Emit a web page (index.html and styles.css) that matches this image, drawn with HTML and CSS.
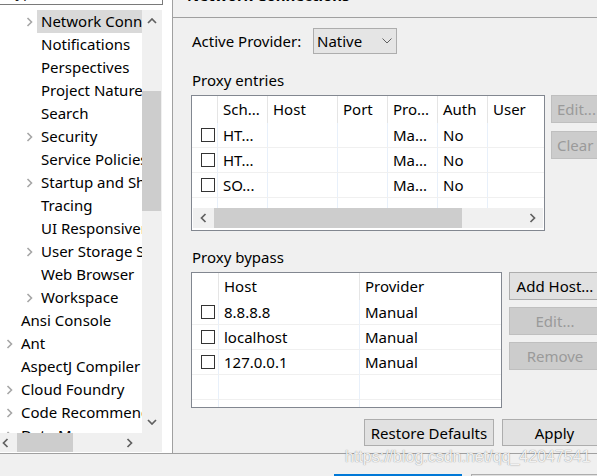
FILE: index.html
```html
<!DOCTYPE html>
<html>
<head>
<meta charset="utf-8">
<title>Preferences - Network Connections</title>
<link rel="stylesheet" href="styles.css">
</head>
<body>
<div class="main">
  <aside class="nav">
    <div class="filter">type filter text</div>
    <div class="tree-frame">
      <div class="tree-top">
        <ul class="tree">
          <li class="node l1"><span class="tw"><svg width="7" height="10" viewBox="0 0 7 10"><path d="M1.5 1 L5.5 5 L1.5 9" fill="none" stroke="#a6a6a6" stroke-width="1.6"/></svg></span><span class="lbl sel">Network Connections</span></li>
          <li class="node l1"><span class="tw"></span><span class="lbl">Notifications</span></li>
          <li class="node l1"><span class="tw"></span><span class="lbl">Perspectives</span></li>
          <li class="node l1"><span class="tw"></span><span class="lbl">Project Natures</span></li>
          <li class="node l1"><span class="tw"></span><span class="lbl">Search</span></li>
          <li class="node l1"><span class="tw"><svg width="7" height="10" viewBox="0 0 7 10"><path d="M1.5 1 L5.5 5 L1.5 9" fill="none" stroke="#a6a6a6" stroke-width="1.6"/></svg></span><span class="lbl">Security</span></li>
          <li class="node l1"><span class="tw"></span><span class="lbl">Service Policies</span></li>
          <li class="node l1"><span class="tw"><svg width="7" height="10" viewBox="0 0 7 10"><path d="M1.5 1 L5.5 5 L1.5 9" fill="none" stroke="#a6a6a6" stroke-width="1.6"/></svg></span><span class="lbl">Startup and Shutdown</span></li>
          <li class="node l1"><span class="tw"></span><span class="lbl">Tracing</span></li>
          <li class="node l1"><span class="tw"></span><span class="lbl">UI Responsiveness</span></li>
          <li class="node l1"><span class="tw"><svg width="7" height="10" viewBox="0 0 7 10"><path d="M1.5 1 L5.5 5 L1.5 9" fill="none" stroke="#a6a6a6" stroke-width="1.6"/></svg></span><span class="lbl">User Storage Service</span></li>
          <li class="node l1"><span class="tw"></span><span class="lbl">Web Browser</span></li>
          <li class="node l1"><span class="tw"><svg width="7" height="10" viewBox="0 0 7 10"><path d="M1.5 1 L5.5 5 L1.5 9" fill="none" stroke="#a6a6a6" stroke-width="1.6"/></svg></span><span class="lbl">Workspace</span></li>
          <li class="node l0"><span class="tw"></span><span class="lbl">Ansi Console</span></li>
          <li class="node l0"><span class="tw"><svg width="7" height="10" viewBox="0 0 7 10"><path d="M1.5 1 L5.5 5 L1.5 9" fill="none" stroke="#a6a6a6" stroke-width="1.6"/></svg></span><span class="lbl">Ant</span></li>
          <li class="node l0"><span class="tw"></span><span class="lbl">AspectJ Compiler</span></li>
          <li class="node l0"><span class="tw"><svg width="7" height="10" viewBox="0 0 7 10"><path d="M1.5 1 L5.5 5 L1.5 9" fill="none" stroke="#a6a6a6" stroke-width="1.6"/></svg></span><span class="lbl">Cloud Foundry</span></li>
          <li class="node l0"><span class="tw"><svg width="7" height="10" viewBox="0 0 7 10"><path d="M1.5 1 L5.5 5 L1.5 9" fill="none" stroke="#a6a6a6" stroke-width="1.6"/></svg></span><span class="lbl">Code Recommenders</span></li>
          <li class="node l0"><span class="tw"><svg width="7" height="10" viewBox="0 0 7 10"><path d="M1.5 1 L5.5 5 L1.5 9" fill="none" stroke="#a6a6a6" stroke-width="1.6"/></svg></span><span class="lbl">Data Management</span></li>
        </ul>
        <div class="vscroll">
          <span class="vbtn"><svg width="10" height="6" viewBox="0 0 10 6"><path d="M1 5 L5 1 L9 5" fill="none" stroke="#606060" stroke-width="1.7"/></svg></span>
          <span class="vthumb"></span>
          <span class="vbtn down"><svg width="10" height="6" viewBox="0 0 10 6"><path d="M1 1 L5 5 L9 1" fill="none" stroke="#606060" stroke-width="1.7"/></svg></span>
        </div>
      </div>
      <div class="tree-bottom">
        <div class="hscroll tree-h">
          <span class="hbtn first"><svg width="7" height="10" viewBox="0 0 7 10"><path d="M5.5 1 L1.5 5 L5.5 9" fill="none" stroke="#606060" stroke-width="1.7"/></svg></span>
          <span class="hthumb tree-thumb"></span>
          <span class="hbtn last"><svg width="7" height="10" viewBox="0 0 7 10"><path d="M1.5 1 L5.5 5 L1.5 9" fill="none" stroke="#606060" stroke-width="1.7"/></svg></span>
        </div>
        <div class="corner"></div>
      </div>
    </div>
  </aside>

  <section class="page">
    <div class="title-bar"><h1 class="title">Network Connections</h1></div>
    <div class="page-body">
      <div class="provider-row">
        <span class="text-label">Active Provider:</span>
        <div class="combo"><span>Native</span><svg width="10" height="6" viewBox="0 0 10 6"><path d="M0.5 0.5 L5 5 L9.5 0.5" fill="none" stroke="#606060" stroke-width="1"/></svg></div>
      </div>

      <div class="section-label">Proxy entries</div>
      <div class="group">
        <div class="grid entries">
          <div class="row head">
            <span class="hc"></span><span class="hc">Sch...</span><span class="hc">Host</span><span class="hc">Port</span><span class="hc">Pro...</span><span class="hc">Auth</span><span class="hc">User</span>
          </div>
          <div class="row">
            <span class="c"><span class="cb"></span></span><span class="c">HT...</span><span class="c"></span><span class="c"></span><span class="c">Ma...</span><span class="c">No</span><span class="c"></span>
          </div>
          <div class="row">
            <span class="c"><span class="cb"></span></span><span class="c">HT...</span><span class="c"></span><span class="c"></span><span class="c">Ma...</span><span class="c">No</span><span class="c"></span>
          </div>
          <div class="row">
            <span class="c"><span class="cb"></span></span><span class="c">SO...</span><span class="c"></span><span class="c"></span><span class="c">Ma...</span><span class="c">No</span><span class="c"></span>
          </div>
          <div class="row filler">
            <span class="c"></span><span class="c"></span><span class="c"></span><span class="c"></span><span class="c"></span><span class="c"></span><span class="c"></span>
          </div>
          <div class="hscroll table-h">
            <span class="hbtn"><svg width="7" height="10" viewBox="0 0 7 10"><path d="M5.5 1 L1.5 5 L5.5 9" fill="none" stroke="#606060" stroke-width="1.7"/></svg></span>
            <span class="hthumb table-thumb"></span>
            <span class="hbtn last"><svg width="7" height="10" viewBox="0 0 7 10"><path d="M1.5 1 L5.5 5 L1.5 9" fill="none" stroke="#606060" stroke-width="1.7"/></svg></span>
          </div>
        </div>
        <div class="side-buttons narrow">
          <button class="btn disabled">Edit...</button>
          <button class="btn disabled">Clear</button>
        </div>
      </div>

      <div class="section-label gap-top">Proxy bypass</div>
      <div class="group">
        <div class="grid bypass">
          <div class="row head">
            <span class="hc"></span><span class="hc">Host</span><span class="hc">Provider</span>
          </div>
          <div class="row"><span class="c"><span class="cb"></span></span><span class="c">8.8.8.8</span><span class="c">Manual</span></div>
          <div class="row"><span class="c"><span class="cb"></span></span><span class="c">localhost</span><span class="c">Manual</span></div>
          <div class="row"><span class="c"><span class="cb"></span></span><span class="c">127.0.0.1</span><span class="c">Manual</span></div>
          <div class="row"><span class="c"></span><span class="c"></span><span class="c"></span></div>
          <div class="row"><span class="c"></span><span class="c"></span><span class="c"></span></div>
        </div>
        <div class="side-buttons wide">
          <button class="btn">Add Host...</button>
          <button class="btn disabled">Edit...</button>
          <button class="btn disabled">Remove</button>
        </div>
      </div>

      <div class="page-buttons">
        <button class="btn restore">Restore Defaults</button>
        <button class="btn apply">Apply</button>
      </div>
    </div>
  </section>
</div>
<footer class="footer">
  <button class="fbtn primary">Apply and Close</button>
  <button class="fbtn">Cancel</button>
</footer>
<div class="watermark">https://blog.csdn.net/qq_42047541</div>
</body>
</html>
```

FILE: styles.css
```css
* { box-sizing: border-box; }

html, body {
  margin: 0;
  padding: 0;
}

body {
  width: 597px;
  height: 476px;
  overflow: hidden;
  position: relative;
  background: #f0f0f0;
  color: #000;
  font-family: "Noto Sans", "Open Sans", sans-serif;
  font-size: 15px;
}

button {
  font-family: inherit;
  font-size: 15px;
  color: #000;
  padding: 0;
  margin: 0;
}

.main {
  display: flex;
  height: 454px;
  border-bottom: 1px solid #a0a0a0;
}

/* ---------- left navigation ---------- */
.nav {
  flex: none;
  width: 173px;
  background: #fff;
  border-right: 1px solid #a0a0a0;
  display: flex;
  flex-direction: column;
}

.filter {
  width: 163px;
  height: 22px;
  margin-top: -17px;
  border: 1px solid #7a7a7a;
  border-top: none;
  border-left: none;
  padding-left: 10px;
  line-height: 16px;
  color: #202020;
  white-space: nowrap;
  overflow: hidden;
}

.tree-frame {
  width: 162px;
  margin-top: 5px;
  height: 442px;
  display: flex;
  flex-direction: column;
}

.tree-top {
  display: flex;
  height: 423px;
}

.tree {
  list-style: none;
  margin: 0;
  padding: 0;
  width: 142px;
  flex: none;
  overflow: hidden;
  background: #fff;
}

.node {
  display: flex;
  align-items: center;
  height: 23px;
  white-space: nowrap;
}

.node.l1 { padding-left: 20px; }
.node.l0 { padding-left: 0; }

.tw {
  flex: none;
  width: 17px;
  height: 23px;
  display: flex;
  align-items: center;
  padding-left: 6px;
}

.lbl {
  flex: 1;
  height: 23px;
  line-height: 23px;
  padding-left: 4px;
  overflow: hidden;
}

.lbl.sel { background: #d9d9d9; }

.vscroll {
  flex: none;
  width: 20px;
  background: #f0f0f0;
  display: flex;
  flex-direction: column;
}

.vbtn {
  height: 21px;
  display: flex;
  align-items: center;
  justify-content: center;
}

.vbtn.down { margin-top: auto; height: 22px; }

.vthumb {
  margin-top: 60px;
  height: 120px;
  width: 19px;
  background: #cdcdcd;
}

.tree-bottom {
  display: flex;
  height: 19px;
}

.corner {
  width: 20px;
  background: #f0f0f0;
}

.hscroll {
  display: flex;
  align-items: stretch;
  background: #f0f0f0;
}

.tree-h {
  width: 142px;
}

.hbtn {
  flex: none;
  width: 21px;
  display: flex;
  align-items: center;
  justify-content: center;
}

.tree-h .hbtn.first { width: 17px; justify-content: flex-start; padding-left: 2px; }
.tree-h .hbtn.last { margin-left: auto; width: 16px; justify-content: flex-start; }

.hthumb { background: #cdcdcd; }
.tree-thumb { width: 56px; }

/* ---------- right page ---------- */
.page {
  flex: none;
  width: 424px;
}

.title-bar {
  display: flow-root;
  height: 18px;
  border-bottom: 1px solid #a0a0a0;
  padding-left: 14px;
}

.title {
  margin: -15px 0 0;
  font-size: 15px;
  font-weight: bold;
  line-height: 20px;
  white-space: nowrap;
}

.page-body {
  padding-left: 18px;
}

.provider-row {
  margin-top: 10px;
  display: flex;
  align-items: center;
  height: 26px;
}

.text-label {
  padding-left: 1px;
  width: 122px;
  white-space: nowrap;
}

.combo {
  width: 84px;
  height: 26px;
  background: #e5e5e5;
  border: 1px solid #adadad;
  padding: 0 4px 0 3px;
  display: flex;
  align-items: center;
  justify-content: space-between;
  line-height: 24px;
}

.section-label {
  margin-top: 16px;
  padding-left: 1px;
  line-height: 20px;
  height: 20px;
}

.section-label.gap-top { margin-top: 16px; }

.group {
  margin-top: 5px;
  display: flex;
  align-items: flex-start;
}

.grid {
  flex: none;
  height: 136px;
  border: 1px solid #828790;
  background: #fff;
  display: flex;
  flex-direction: column;
  overflow: hidden;
}

.grid.entries { width: 354px; }
.grid.bypass { width: 311px; }

.row {
  flex: none;
  display: grid;
  height: 25px;
  border-bottom: 1px solid #f0f0f0;
  white-space: nowrap;
}

.entries .row { grid-template-columns: 25px 50px 70px 50px 50px 50px 57px; }
.bypass .row { grid-template-columns: 26px 141px 142px; }

.row.head {
  height: 27px;
  border-bottom: none;
}

.hc {
  line-height: 27px;
  padding-left: 5px;
  overflow: hidden;
}

.hc + .hc { border-left: 1px solid #e5e5e5; }

.c {
  line-height: 24px;
  padding-left: 5px;
  overflow: hidden;
  display: flex;
  align-items: center;
}

.c + .c { border-left: 1px solid #e8f0fa; }

.c:first-child { padding-left: 9px; }

.cb {
  flex: none;
  width: 14px;
  height: 14px;
  border: 1px solid #333;
  background: #fff;
}

.row.filler {
  flex: 1 1 auto;
  min-height: 0;
  border-bottom: none;
}

.table-h {
  flex: none;
  height: 20px;
  margin: 0 1px 2px;
}

.table-thumb { width: 248px; }
.table-h .hbtn.last { margin-left: auto; }

.side-buttons {
  display: flex;
  flex-direction: column;
}

.side-buttons.narrow { margin-left: 6px; gap: 8px; }
.side-buttons.wide { margin-left: 7px; gap: 7px; }

.btn {
  height: 28px;
  background: #e1e1e1;
  border: 1px solid #adadad;
  text-align: center;
  white-space: nowrap;
}

.narrow .btn { width: 56px; text-align: left; padding-left: 5px; }
.wide .btn { width: 92px; }

.btn.disabled {
  background: #cccccc;
  border-color: #bfbfbf;
  color: #9a9a9a;
}

.page-buttons {
  margin-top: 11px;
  padding-left: 173px;
  display: flex;
  gap: 8px;
}

.page-buttons .btn { height: 27px; }
.btn.restore { width: 130px; flex: none; }
.btn.apply { width: 105px; flex: none; }

/* ---------- footer ---------- */
.footer {
  height: 22px;
  overflow: hidden;
  display: flex;
  align-items: flex-start;
  gap: 9px;
  padding: 20px 0 0 334px;
}

.fbtn {
  flex: none;
  width: 128px;
  height: 28px;
  background: #e1e1e1;
  border: 1px solid #adadad;
  font-size: 15px;
}

.fbtn.primary {
  border: 2px solid #0078d7;
}

.watermark {
  position: absolute;
  left: 345px;
  top: 449px;
  font-family: "Liberation Sans", Arial, sans-serif;
  font-size: 16px;
  line-height: 16px;
  color: rgba(255, 255, 255, 0.9);
  text-shadow: 0 0 1px rgba(90, 90, 90, 0.55), 0 0 1px rgba(90, 90, 90, 0.35);
  white-space: nowrap;
}
```
